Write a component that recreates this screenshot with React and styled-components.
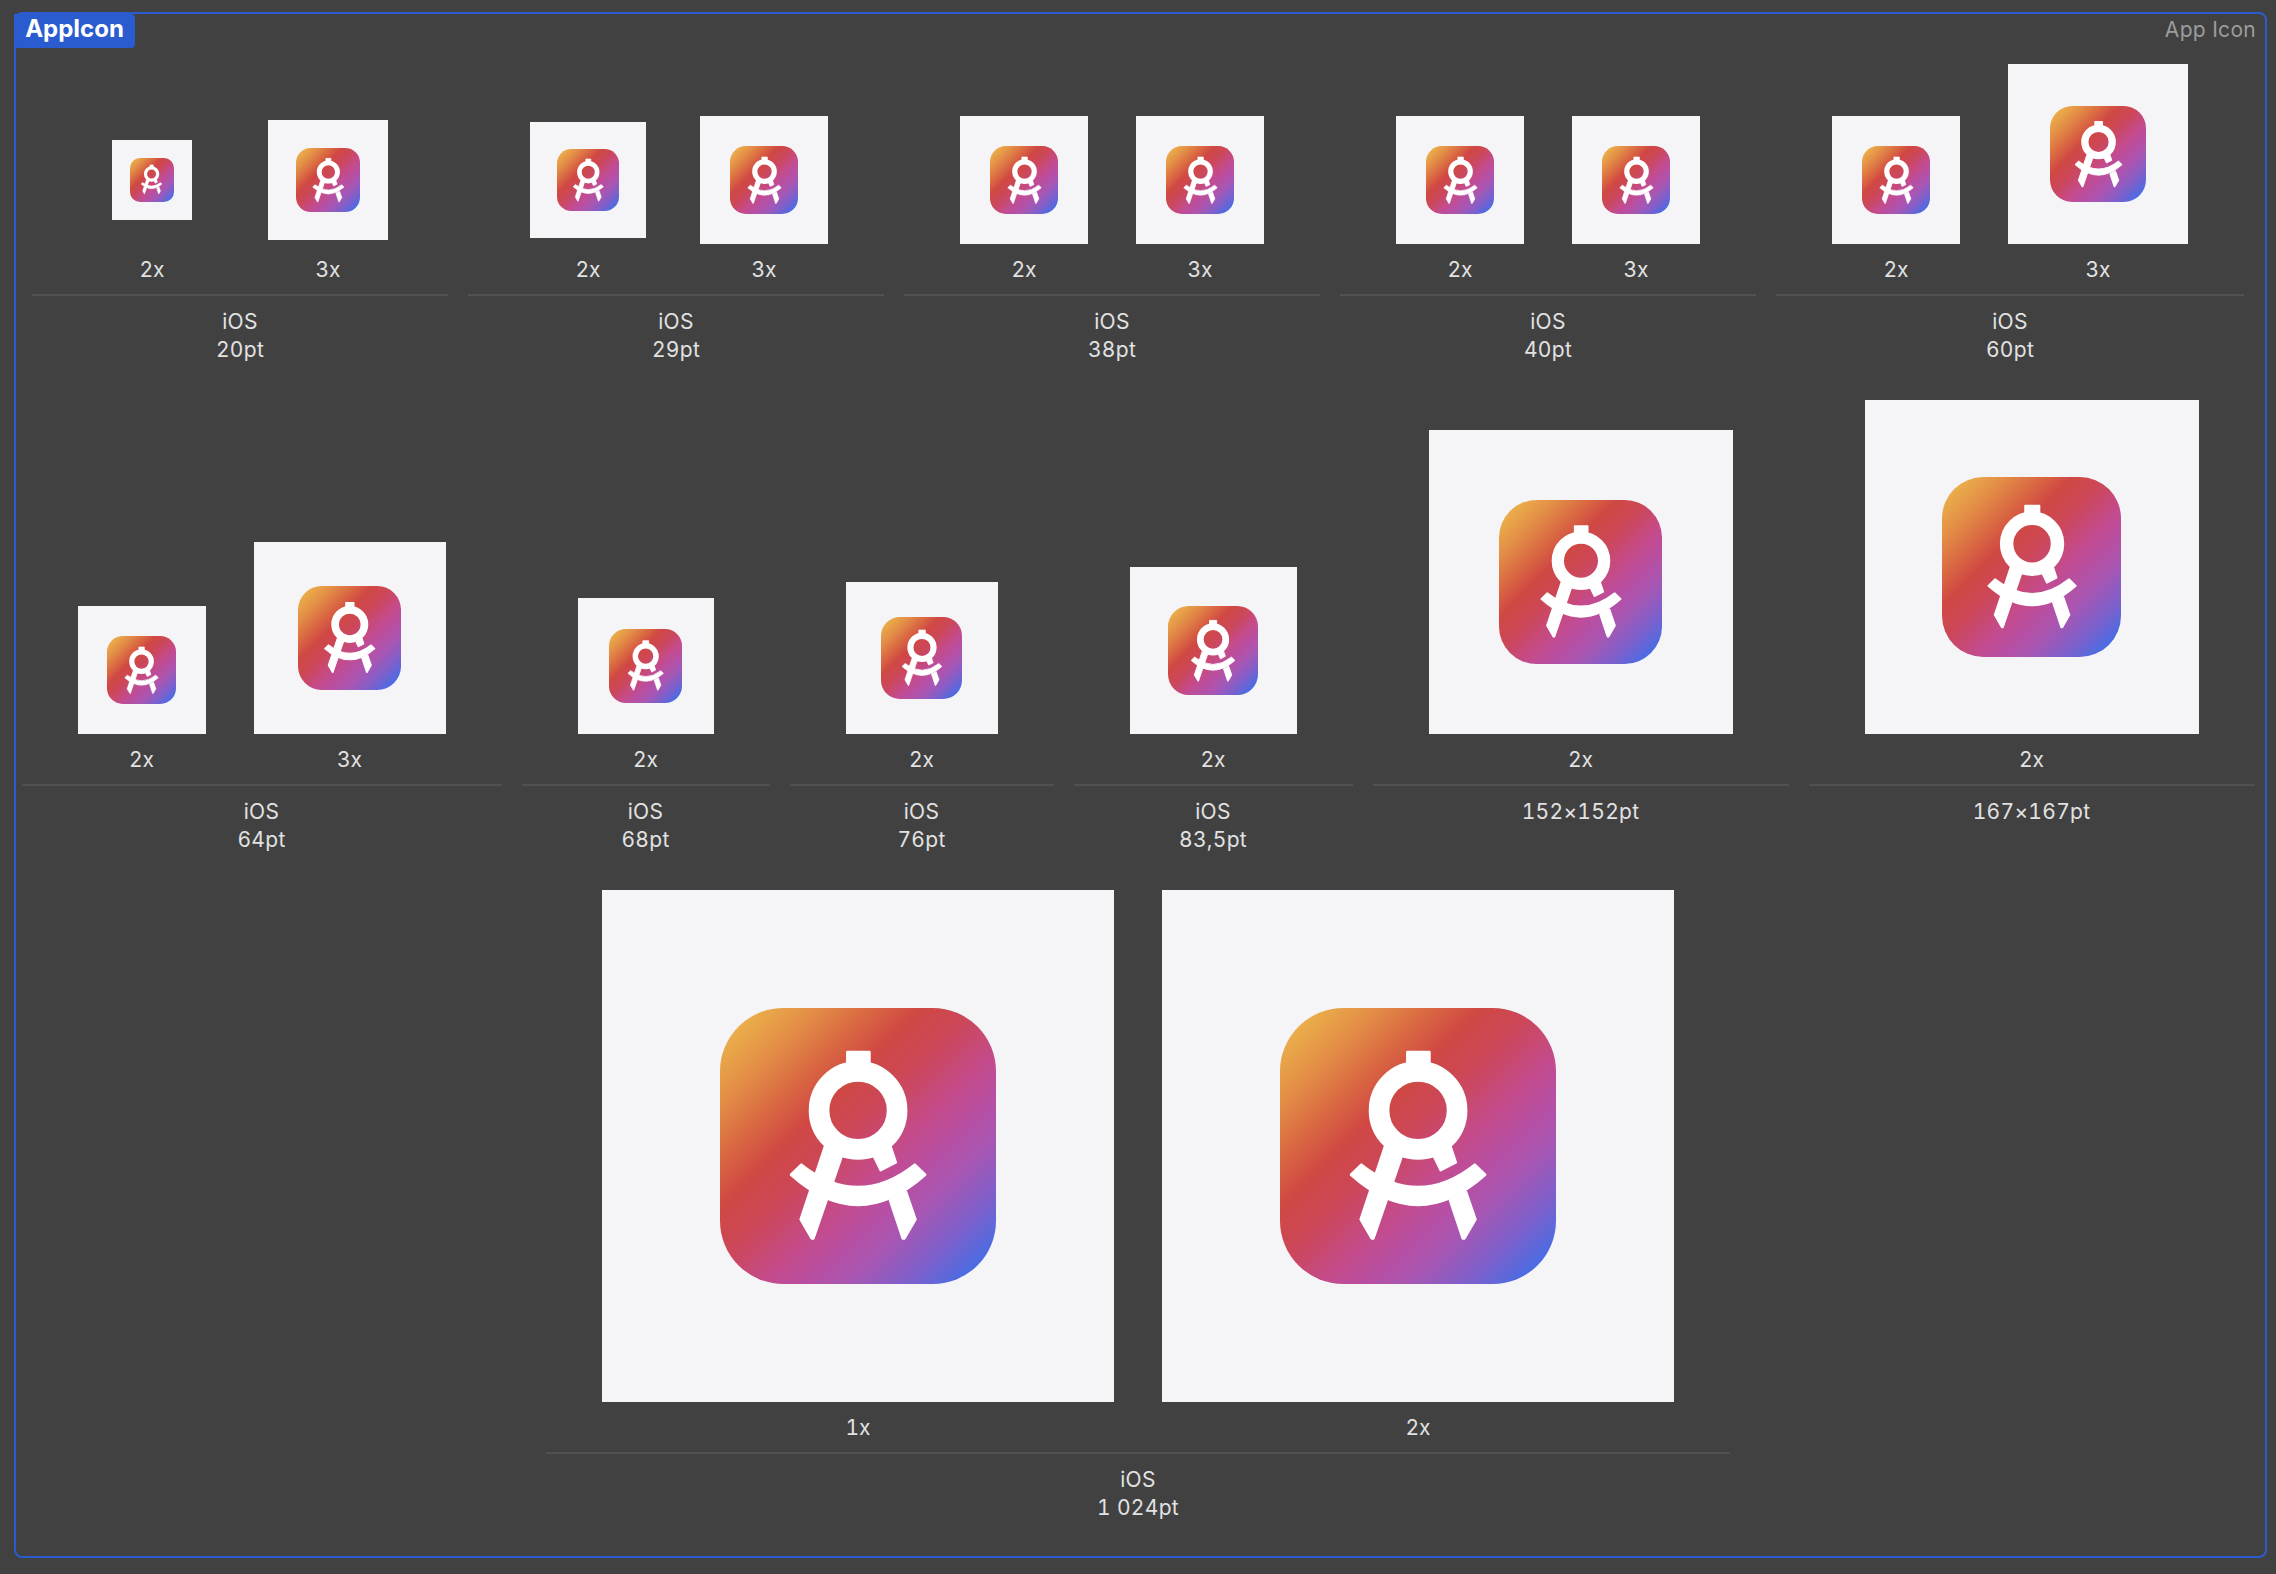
/**
 * App icon set, asset catalog view
 */

import React from 'react';
import styled, { createGlobalStyle } from 'styled-components';

const GlobalStyle = createGlobalStyle`
  html, body {
    margin: 0;
    padding: 0;
    background: #414141;
    font-family: Inter, "Liberation Sans", sans-serif;
  }
`;

const Frame = styled.div`
  position: relative;
  box-sizing: border-box;
  width: 2253px;
  height: 1546px;
  margin: 12px 0 0 14px;
  padding: 50px 5px 0 0;
  border: 2px solid #2a5bcf;
  border-radius: 8px;
  display: flex;
  flex-direction: column;
  gap: 36px;
`;

const Badge = styled.div`
  position: absolute;
  top: 0;
  left: -2px;
  width: 121px;
  height: 34px;
  border-radius: 0 4px 4px 4px;
  background: #2a5bcf;
  color: #ffffff;
  font-size: 24px;
  font-weight: 700;
  line-height: 30px;
  text-align: center;
`;

const FrameTitle = styled.div`
  position: absolute;
  top: 2px;
  right: 9px;
  color: #9c9c9c;
  font-size: 21px;
  letter-spacing: 0.3px;
  line-height: 28px;
`;

const Row = styled.div`
  display: flex;
  justify-content: center;
  align-items: flex-end;
  gap: 20px;
`;

const Group = styled.div`
  display: flex;
  flex-direction: column;
`;

const Slots = styled.div`
  display: flex;
  justify-content: center;
  align-items: flex-end;
  gap: 48px;
  padding: 0 56px;
`;

const Slot = styled.div`
  display: flex;
  flex-direction: column;
  align-items: center;
`;

const TileArea = styled.div`
  display: flex;
  align-items: center;
  justify-content: center;
  min-width: 128px;
  min-height: 128px;
`;

const Tile = styled.div`
  display: flex;
  align-items: center;
  justify-content: center;
  width: ${(p) => p.$size}px;
  height: ${(p) => p.$size}px;
  background: #f5f5f8;
`;

const IconFace = styled.div`
  width: 53.8%;
  aspect-ratio: 1;
  border-radius: 23%;
  overflow: hidden;
  background: linear-gradient(
    135deg,
    #ecb34a 5%,
    #e38f47 17%,
    #da6a42 27%,
    #d04843 36%,
    #cc4758 46%,
    #c44b8c 58%,
    #b74fa3 66%,
    #a956b2 73%,
    #7c60cc 84%,
    #3a70ea 96%
  );
`;

const Glyph = styled.svg`
  display: block;
  width: 100%;
  height: 100%;
`;

const Scale = styled.div`
  margin-top: 12px;
  color: #e2e2e2;
  font-size: 21px;
  font-variant-numeric: tabular-nums;
  line-height: 28px;
`;

const Divider = styled.hr`
  width: 100%;
  height: 2px;
  margin: 10px 0 0;
  border: none;
  background: #515151;
`;

const Caption = styled.div`
  min-height: 56px;
  margin-top: 12px;
  color: #e2e2e2;
  font-size: 21px;
  font-variant-numeric: tabular-nums;
  letter-spacing: 0.3px;
  line-height: 28px;
  text-align: center;
`;

const rows = [
  [
    { lines: ['iOS', '20pt'], slots: [['2x', 80], ['3x', 120]] },
    { lines: ['iOS', '29pt'], slots: [['2x', 116], ['3x', 128]] },
    { lines: ['iOS', '38pt'], slots: [['2x', 128], ['3x', 128]] },
    { lines: ['iOS', '40pt'], slots: [['2x', 128], ['3x', 128]] },
    { lines: ['iOS', '60pt'], slots: [['2x', 128], ['3x', 180]] },
  ],
  [
    { lines: ['iOS', '64pt'], slots: [['2x', 128], ['3x', 192]] },
    { lines: ['iOS', '68pt'], slots: [['2x', 136]] },
    { lines: ['iOS', '76pt'], slots: [['2x', 152]] },
    { lines: ['iOS', '83,5pt'], slots: [['2x', 167]] },
    { lines: ['152×152pt'], slots: [['2x', 304]] },
    { lines: ['167×167pt'], slots: [['2x', 334]] },
  ],
  [
    { lines: ['iOS', '1 024pt'], slots: [['1x', 512], ['2x', 512]] },
  ],
];

function AppIcon() {
  return (
    <IconFace>
      <Glyph viewBox="60 55 826 826">
        <g fill="#fff" stroke="#fff" strokeWidth="8" strokeLinejoin="round">
          {/* cap */}
          <rect x="442" y="187" width="66" height="50" />
          {/* left leg */}
          <path d="M375 470 L402 462 L424 502 L340 746 L335 746 L302 689 Z" />
          {/* right leg */}
          <path d="M570 632 L618 607 L646 689 L613 746 L608 746 Z" />
          {/* stub under the ring */}
          <path d="M571 470 L587 518 L542 541 L523 502 L545 470 Z" />
          {/* arc */}
          <path d="M304 525 Q474 660 644 525 L675 555 Q474 735 273 555 Z" />
        </g>
        <circle cx="474" cy="362" r="117" fill="none" stroke="#fff" strokeWidth="62" />
      </Glyph>
    </IconFace>
  );
}

function App() {
  return (
    <>
      <GlobalStyle />
      <Frame>
        <Badge>AppIcon</Badge>
        <FrameTitle>App Icon</FrameTitle>

        {rows.map((groups, i) => (
          <Row key={i}>
            {groups.map((group) => (
              <Group key={group.lines.join()}>
                <Slots>
                  {group.slots.map(([scale, size]) => (
                    <Slot key={scale}>
                      <TileArea>
                        <Tile $size={size}>
                          <AppIcon />
                        </Tile>
                      </TileArea>
                      <Scale>{scale}</Scale>
                    </Slot>
                  ))}
                </Slots>
                <Divider />
                <Caption>
                  {group.lines.map((line) => (
                    <div key={line}>{line}</div>
                  ))}
                </Caption>
              </Group>
            ))}
          </Row>
        ))}
      </Frame>
    </>
  );
}

export default App;
